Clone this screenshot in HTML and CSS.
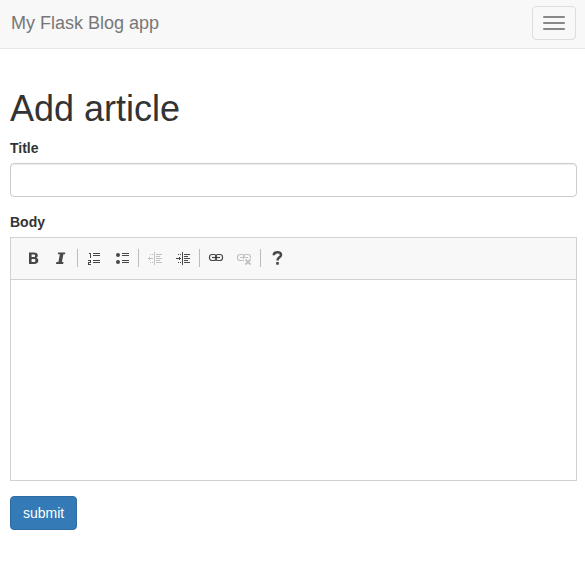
FILE: index.html
```html
<!DOCTYPE html>
<html lang="en">
<head>
<meta charset="utf-8">
<title>My Flask Blog app</title>
<link rel="stylesheet" href="styles.css">
</head>
<body>
<nav class="navbar">
  <a class="brand">My Flask Blog app</a>
  <button class="toggle" aria-label="Toggle navigation"><span></span><span></span><span></span></button>
</nav>
<main class="container">
  <h1>Add article</h1>
  <form>
    <div class="group">
      <label for="title">Title</label>
      <input id="title" class="control" type="text">
    </div>
    <div class="group">
      <label>Body</label>
      <div class="editor">
        <div class="toolbar">
          <a class="tool"><svg viewBox="0 0 16 16"><path fill-rule="evenodd" d="M4 2.400h5c2.500 0 3.800 1 3.800 3 0 1.200-.6 2-1.500 2.400 1.300.4 2 1.300 2 2.700 0 2.200-1.500 3.500-4.100 3.500H4zM6.600 4.500v2.500h2c1 0 1.500-.4 1.500-1.300 0-.8-.5-1.200-1.500-1.200zM6.600 9v2.900h2.200c1.100 0 1.600-.5 1.600-1.500S9.900 9 8.800 9z"/></svg></a>
          <a class="tool"><svg viewBox="0 0 16 16"><path d="M5.200 2.500H12.300L12 4.300h-1.600L8.900 12h1.600l-.4 2H3l.4-2h2L6.900 4.300H4.800z"/></svg></a>
          <span class="sep"></span>
          <a class="tool"><svg viewBox="0 0 16 16" shape-rendering="crispEdges"><path d="M3 3h2v5H4V4H3zM2 10h3v1H2zM4 11h1v1H4zM2 12h3v1H2zM2 13h1v1H2zM2 14h3v1H2zM7 3h7v1H7zM7 5h7v1H7zM7 10h7v1H7zM7 12h7v1H7z"/></svg></a>
          <a class="tool"><svg viewBox="0 0 16 16"><circle cx="4" cy="5" r="2"/><circle cx="4" cy="12" r="2"/><path d="M8 3h7v1H8zM8 5h7v1H8zM8 10h7v1H8zM8 12h7v1H8z"/></svg></a>
          <span class="sep"></span>
          <a class="tool off"><svg viewBox="0 0 16 16" shape-rendering="crispEdges"><path d="M7 2h1v13H7zM9 4h6v1H9zM9 6h4v1H9zM9 8h6v1H9zM9 10h4v1H9zM9 12h6v1H9zM3 4h1v1H3zM5 4h1v1H5zM3 12h1v1H3zM5 12h1v1H5zM1 8h5v1H1zM2 7h1v3H2z"/></svg></a>
          <a class="tool"><svg viewBox="0 0 16 16" shape-rendering="crispEdges"><path d="M7 2h1v13H7zM9 4h6v1H9zM9 6h4v1H9zM9 8h6v1H9zM9 10h4v1H9zM9 12h6v1H9zM3 4h1v1H3zM5 4h1v1H5zM3 12h1v1H3zM5 12h1v1H5zM1 8h5v1H1zM4 7h1v3H4z"/></svg></a>
          <span class="sep"></span>
          <a class="tool"><svg viewBox="0 0 16 16"><g class="line"><rect x="1.500" y="4.500" width="7" height="6" rx="2.500"/><rect x="7.500" y="4.500" width="7" height="6" rx="2.500"/><path d="M4 7.500h8"/></g></svg></a>
          <a class="tool off"><svg viewBox="0 0 16 16"><g class="line"><path d="M8 10.500H4a2.500 2.500 0 0 1-2.500-2.500V7A2.500 2.500 0 0 1 4 4.500h2.500a2 2 0 0 1 2 2M7.500 9V6.500a2 2 0 0 1 2-2H12A2.500 2.500 0 0 1 14.500 7v1.500M4 7.500h8"/><path class="cross" d="M9.500 9.500l5 5M14.500 9.500l-5 5"/></g></svg></a>
          <span class="sep"></span>
          <a class="tool"><svg viewBox="0 0 16 16"><path class="question" d="M4.700 5.200C4.800 3.200 6.300 2.200 8.500 2.200c2.100 0 3.500 1 3.500 2.700 0 2.500-3.500 2.400-3.500 5.500"/><path d="M7.200 12h2.600v2.700H7.200z"/></svg></a>
        </div>
        <div class="content" contenteditable="true"></div>
      </div>
    </div>
    <button class="submit" type="button">submit</button>
  </form>
</main>
</body>
</html>
```
FILE: styles.css
```css
* { box-sizing: border-box; }
body {
  margin: 0;
  color: #333;
  background: #fff;
  font: 14px/20px "Liberation Sans", Arial, sans-serif;
}
.navbar {
  display: flex;
  justify-content: space-between;
  align-items: flex-start;
  height: 49px;
  padding: 6px 9px 0 11px;
  background: #f8f8f8;
  border-bottom: 1px solid #e7e7e7;
}
.brand { padding-top: 7px; color: #777; font-size: 18px; }
.toggle {
  display: flex;
  flex-direction: column;
  gap: 4px;
  width: 44px;
  height: 34px;
  padding: 9px 10px;
  background: transparent;
  border: 1px solid #ddd;
  border-radius: 4px;
}
.toggle span { width: 22px; height: 2px; background: #888; border-radius: 1px; }
.container { padding: 40px 8px 0 10px; }
h1 { margin: 0 0 9px; font-size: 36px; font-weight: 500; line-height: 40px; }
.group { margin-bottom: 15px; }
label { display: block; margin-bottom: 5px; font-weight: 700; }
.control {
  display: block;
  width: 100%;
  height: 34px;
  padding: 6px 12px;
  border: 1px solid #ccc;
  border-radius: 4px;
  box-shadow: inset 0 1px 1px rgba(0, 0, 0, .075);
}
.editor { border: 1px solid #d1d1d1; }
.toolbar {
  display: flex;
  align-items: center;
  height: 42px;
  padding: 0 0 1px 8px;
  background: #f8f8f8;
  border-bottom: 1px solid #d1d1d1;
}
.tool { display: flex; width: 28px; padding: 0 6px; }
.tool svg { width: 16px; height: 16px; fill: #484848; }
.tool.off { opacity: .3; }
.line { fill: none; stroke: #484848; stroke-width: 1.2; }
.cross { stroke-width: 1.8; }
.question { fill: none; stroke: #484848; stroke-width: 2.5; }
.sep { width: 1px; height: 18px; margin: 0 2px; background: #bcbcbc; }
.content { height: 200px; outline: none; }
.submit {
  display: block;
  height: 34px;
  padding: 6px 12px;
  color: #fff;
  background: #337ab7;
  border: 1px solid #2e6da4;
  border-radius: 4px;
  font: inherit;
}
```
